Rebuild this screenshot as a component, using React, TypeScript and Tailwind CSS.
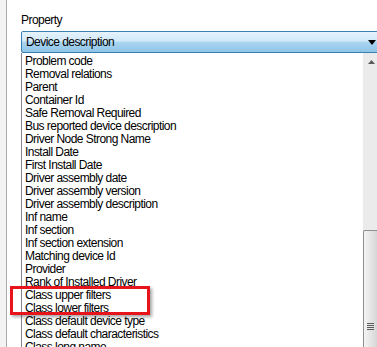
export default function App() {
  const items = [
    'Problem code',
    'Removal relations',
    'Parent',
    'Container Id',
    'Safe Removal Required',
    'Bus reported device description',
    'Driver Node Strong Name',
    'Install Date',
    'First Install Date',
    'Driver assembly date',
    'Driver assembly version',
    'Driver assembly description',
    'Inf name',
    'Inf section',
    'Inf section extension',
    'Matching device Id',
    'Provider',
    'Rank of Installed Driver',
    'Class upper filters',
    'Class lower filters',
    'Class default device type',
    'Class default characteristics',
    'Class long name',
  ]

  return (
    <div
      className="relative flex w-[377px] h-[347px] overflow-hidden bg-white text-black text-[12px] leading-[13px] tracking-[-0.55px]"
      style={{ fontFamily: '"Liberation Sans", Arial, sans-serif' }}
    >
      <div className="w-[7px] shrink-0 bg-[#f3f3f3] border-r border-[#acacac]" />
      <div className="flex flex-col w-[373px] h-[347px] shrink-0 pl-[14px] pt-[14px]">
        <div className="h-[13px] shrink-0">Property</div>
        <div className="mt-[4px] h-[22px] shrink-0 w-[361px] flex items-center justify-between rounded-[2px] border border-[#3c7fb1] bg-[linear-gradient(to_bottom,#e6f3fc_0%,#d0e9f9_45%,#aad5f1_52%,#8fc4e8_100%)] pl-[4px] pr-[4px]">
          <span>Device description</span>
          <svg width="8" height="5" viewBox="0 0 8 5" className="mr-[1px]">
            <path d="M0 0H8L4 5Z" fill="#000" />
          </svg>
        </div>
        <div className="flex flex-1 min-h-0 overflow-hidden border-l border-[#828790]">
          <div className="flex-1 flex flex-col pl-[3px] pt-[2px] whitespace-nowrap">
            {items.map(t => (
              <div key={t} className="h-[13px] shrink-0">{t}</div>
            ))}
          </div>
          <div className="w-[17px] shrink-0 flex flex-col bg-[#ebebeb]">
            <div className="h-[17px] shrink-0 flex items-center justify-center">
              <svg width="7" height="4" viewBox="0 0 7 4">
                <path d="M0 4H7L3.5 0Z" fill="#5a5a5a" />
              </svg>
            </div>
            <div className="h-[160px] shrink-0" />
            <div className="flex-1 border-l border-t border-[#8e8f8f] rounded-tl-[2px] bg-[linear-gradient(to_right,#f4f4f4_0%,#e2e2e2_50%,#cfcfcf_100%)] pt-[92px] pl-[3px]">
              <div className="flex flex-col gap-[1px] w-[7px]">
                <div className="h-[1px] bg-[#5c5c5c]" />
                <div className="h-[1px] bg-[#5c5c5c]" />
                <div className="h-[1px] bg-[#5c5c5c]" />
                <div className="h-[1px] bg-[#5c5c5c]" />
              </div>
            </div>
          </div>
        </div>
      </div>
      <div className="absolute left-[10px] top-[286px] w-[140px] h-[29px] border-[3px] border-[#e8141b] shadow-[2px_2px_3px_rgba(0,0,0,0.35)]" />
    </div>
  )
}
